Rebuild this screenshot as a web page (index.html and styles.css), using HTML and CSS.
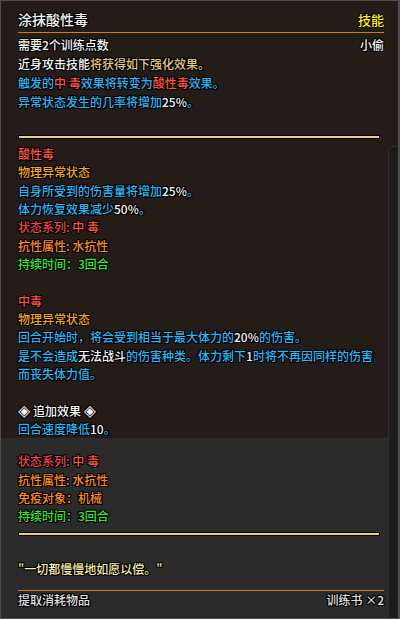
FILE: index.html
```html
<!DOCTYPE html>
<html lang="zh-CN">
<head>
<meta charset="utf-8">
<title>涂抹酸性毒</title>
<link rel="stylesheet" href="styles.css">
</head>
<body>
<div class="tip">
  <section class="main">
    <header class="head">
      <span class="title">涂抹酸性毒</span>
      <span class="kind">技能</span>
    </header>
    <div class="intro">
      <div class="row"><span class="w">需要2个训练点数</span><span class="w">小偷</span></div>
      <p><span class="w">近身攻击技能</span><span class="t">将获得如下强化效果。</span></p>
      <p><span class="c">触发的</span><span class="r">中 毒</span><span class="c">效果将转变为</span><span class="r">酸性毒</span><span class="c">效果。</span></p>
      <p><span class="c">异常状态发生的几率将增加</span><span class="w">25%</span><span class="c">。</span></p>
    </div>
    <div class="rule"></div>
    <div class="body">
      <p class="r">酸性毒</p>
      <p class="g">物理异常状态</p>
      <p><span class="c">自身所受到的伤害量将增加</span><span class="w">25%</span><span class="c">。</span></p>
      <p><span class="c">体力恢复效果减少</span><span class="w">50%</span><span class="c">。</span></p>
      <p><span class="rd">状态系列:</span> <span class="r">中 毒</span></p>
      <p class="o">抗性属性: 水抗性</p>
      <p class="gr">持续时间：3回合</p>
      <p class="blank"></p>
      <p class="r">中毒</p>
      <p class="g">物理异常状态</p>
      <p><span class="c">回合开始时，将会受到相当于最大体力的</span><span class="w">20%</span><span class="c">的伤害。</span></p>
      <p><span class="c">是不会造成</span><span class="w">无法战斗</span><span class="c">的伤害种类。体力剩下</span><span class="w">1</span><span class="c">时将不再因同样的伤害</span></p>
      <p class="c">而丧失体力值。</p>
      <p class="blank"></p>
      <p class="w"><span class="dia">◈</span> 追加效果 <span class="dia">◈</span></p>
      <p><span class="c">回合速度降低</span><span class="w">10</span><span class="c">。</span></p>
    </div>
  </section>
  <section class="lower">
    <div class="body">
      <p><span class="rd">状态系列:</span> <span class="r">中 毒</span></p>
      <p class="o">抗性属性: 水抗性</p>
      <p class="o">免疫对象：机械</p>
      <p class="gr">持续时间：3回合</p>
    </div>
    <div class="rule"></div>
    <p class="quote">"一切都慢慢地如愿以偿。"</p>
    <footer class="foot">
      <span>提取消耗物品</span>
      <span>训练书 ×2</span>
    </footer>
  </section>
  <div class="scroll"></div>
</div>
</body>
</html>
```
FILE: styles.css
```css
* { box-sizing: border-box; }
html, body { margin: 0; padding: 0; background: #2a2a2a; }
body {
  font-family: "Noto Sans CJK SC", "Noto Sans", sans-serif;
  font-size: 12px;
  font-weight: 500;
  color: #f0f0f0;
}
p { margin: 0; }
.tip {
  position: relative;
  width: 400px;
  height: 619px;
  border: 1px solid #4e4e4e;
  border-right-width: 2px;
  display: flex;
  flex-direction: column;
  overflow: hidden;
  text-shadow: 1px 0 #000, -1px 0 #000, 0 1px #000, 0 -1px #000, 1px 1px #000, -1px -1px #000, 1px -1px #000, -1px 1px #000;
}
.main {
  background: #231c18;
  padding: 0 14px 0 17px;
}
.head {
  display: flex;
  justify-content: space-between;
  align-items: baseline;
  padding-top: 8px;
  padding-bottom: 2px;
  border-bottom: 1px solid #d27c1a;
}
.title { font-size: 14px; line-height: 20px; color: #f4f4f4; }
.kind { font-size: 13px; line-height: 20px; color: #fff200; text-shadow: 1px 0 #000, -1px 0 #000, 0 1px #000, 0 -1px #000; }
.intro { margin-top: 2px; line-height: 19px; }
.row { display: flex; justify-content: space-between; }
.rule {
  margin-top: 24px;
  margin-right: 4px;
  height: 4px;
  border: 1px solid #000;
  background: #e8cf8a;
}
.main .body { margin-top: 6px; }
.body { line-height: 18.33px; }
.blank { height: 18.33px; }
.lower {
  flex: 1;
  background: #2b2b2b;
  padding: 14px 14px 0 17px;
  display: flex;
  flex-direction: column;
}
.lower .rule { margin-top: 6px; }
.quote {
  margin-top: 24px;
  line-height: 18.33px;
  color: #f6f0a8;
}
.foot {
  margin-top: 12px;
  border-top: 1px solid #d27c1a;
  display: flex;
  justify-content: space-between;
  line-height: 18px;
  color: #e0e0e0;
}
.scroll {
  position: absolute;
  left: 387px;
  top: 145px;
  width: 11px;
  bottom: 0;
  background: #1c1c1c;
  border-left: 1px solid #2f2f2f;
  border-top: 1px solid #2f2f2f;
  border-top-left-radius: 5px;
}
.dia { font-family: "DejaVu Sans", sans-serif; font-size: 16px; line-height: 12px; }
.w { color: #f6f6f6; }
.t { color: #e2ca80; }
.c { color: #24b8f4; }
.r { color: #ff5442; }
.rd { color: #e84848; }
.g { color: #f6aa00; }
.o { color: #ff8c18; }
.gr { color: #2ee82e; }
```
